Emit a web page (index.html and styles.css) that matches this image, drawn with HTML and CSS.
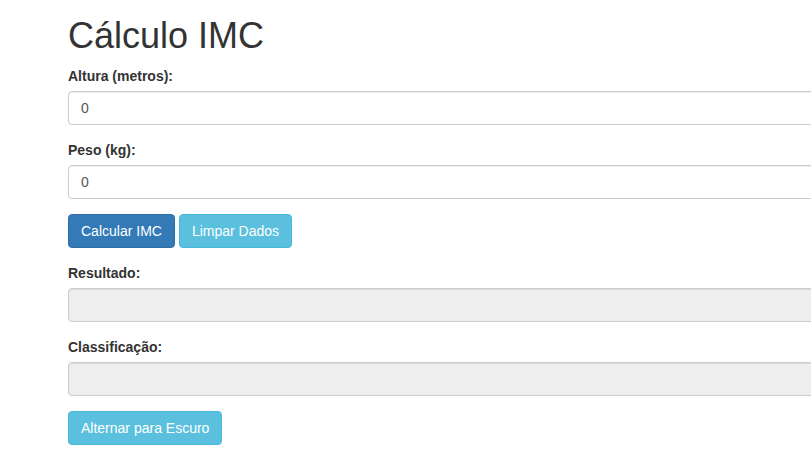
FILE: index.html
```html
<!DOCTYPE html>
<html lang="pt-BR">
<head>
<meta charset="utf-8">
<title>Cálculo IMC</title>
<link rel="stylesheet" href="styles.css">
</head>
<body>
<div class="viewport">
<div class="container">
  <h1 class="title">Cálculo IMC</h1>
  <div class="form-group">
    <label class="label" for="altura">Altura (metros):</label>
    <input class="input" id="altura" type="text" value="0">
  </div>
  <div class="form-group">
    <label class="label" for="peso">Peso (kg):</label>
    <input class="input" id="peso" type="text" value="0">
  </div>
  <div class="actions">
    <button class="btn btn-primary" type="button">Calcular IMC</button>
    <button class="btn btn-info" type="button">Limpar Dados</button>
  </div>
  <div class="form-group">
    <label class="label" for="resultado">Resultado:</label>
    <input class="input input-readonly" id="resultado" type="text" readonly>
  </div>
  <div class="form-group">
    <label class="label" for="classificacao">Classificação:</label>
    <input class="input input-readonly" id="classificacao" type="text" readonly>
  </div>
  <div class="actions">
    <button class="btn btn-info" type="button">Alternar para Escuro</button>
  </div>
</div>
</div>
</body>
</html>
```
FILE: styles.css
```css
html, body {
  margin: 0;
  padding: 0;
  overflow: hidden;
  background: #fff;
}
body {
  font-family: "Liberation Sans", Arial, Helvetica, sans-serif;
  font-size: 14px;
  line-height: 1.42857143;
  color: #333;
}
.viewport {
  width: 100%;
  overflow: hidden;
}
.container {
  width: 1100px;
  padding-left: 68px;
  padding-top: 1px;
  box-sizing: content-box;
}
.title {
  font-size: 36px;
  font-weight: 500;
  line-height: 1.1;
  margin: 15px 0 10px;
  color: #333;
}
.form-group {
  margin-bottom: 15px;
}
.label {
  display: block;
  font-weight: bold;
  margin-bottom: 5px;
}
.input {
  display: block;
  box-sizing: border-box;
  width: 100%;
  height: 34px;
  padding: 6px 12px;
  font-family: inherit;
  font-size: 14px;
  line-height: 1.42857143;
  color: #555;
  background: #fff;
  border: 1px solid #ccc;
  border-radius: 4px;
  box-shadow: inset 0 1px 1px rgba(0,0,0,.075);
  outline: none;
}
.input-readonly {
  background: #eee;
}
.actions {
  display: flex;
  gap: 4px;
  margin-bottom: 15px;
}
.btn {
  height: 34px;
  padding: 6px 12px;
  font-family: inherit;
  font-size: 14px;
  line-height: 1.42857143;
  color: #fff;
  border: 1px solid transparent;
  border-radius: 4px;
  cursor: pointer;
}
.btn-primary {
  background: #337ab7;
  border-color: #2e6da4;
}
.btn-info {
  background: #5bc0de;
  border-color: #46b8da;
}
```
